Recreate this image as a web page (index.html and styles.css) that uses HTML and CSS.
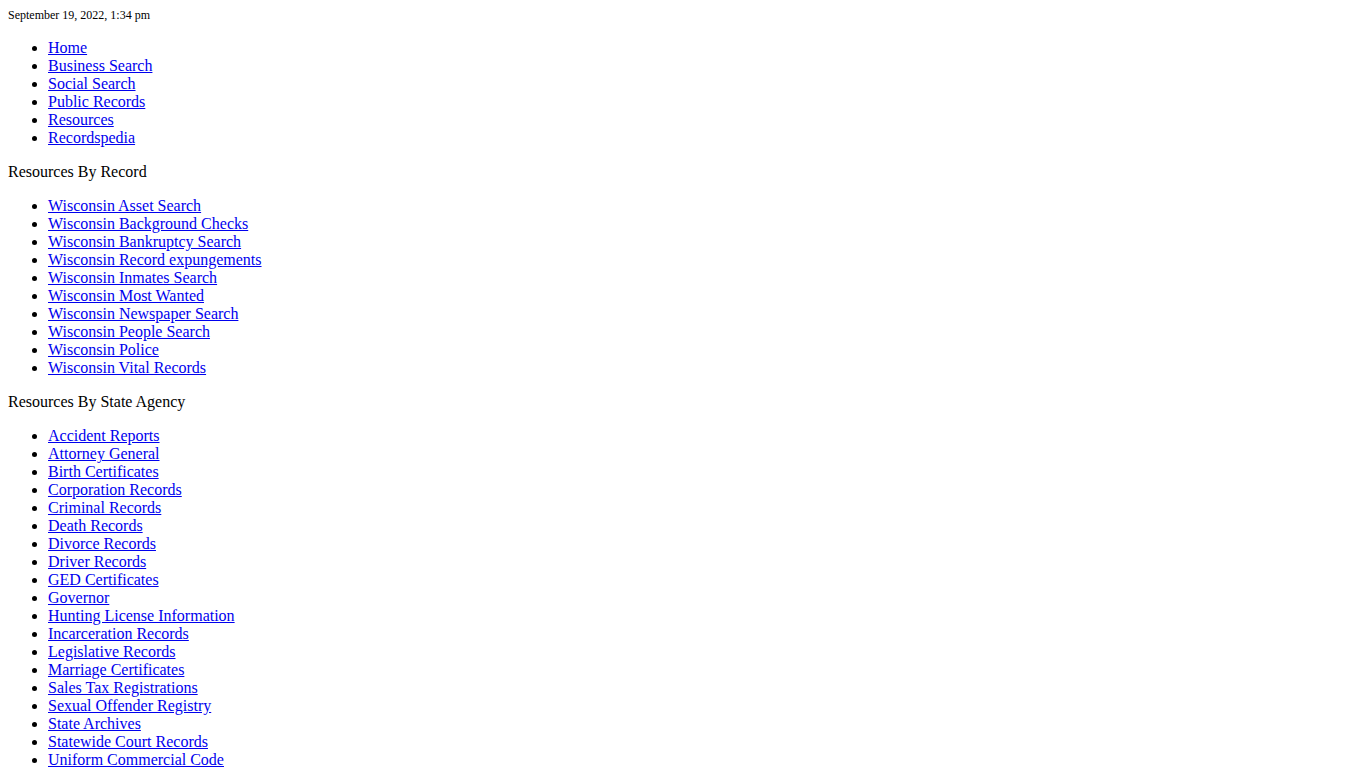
FILE: index.html
```html
<!DOCTYPE html>
<html>
<head>
<meta charset="utf-8">
<link rel="stylesheet" href="styles.css">
</head>
<body>
<div class="date">September 19, 2022, 1:34 pm</div>
<ul class="list">
<li><a href="#">Home</a></li>
<li><a href="#">Business Search</a></li>
<li><a href="#">Social Search</a></li>
<li><a href="#">Public Records</a></li>
<li><a href="#">Resources</a></li>
<li><a href="#">Recordspedia</a></li>
</ul>
<div class="heading">Resources By Record</div>
<ul class="list">
<li><a href="#">Wisconsin Asset Search</a></li>
<li><a href="#">Wisconsin Background Checks</a></li>
<li><a href="#">Wisconsin Bankruptcy Search</a></li>
<li><a href="#">Wisconsin Record expungements</a></li>
<li><a href="#">Wisconsin Inmates Search</a></li>
<li><a href="#">Wisconsin Most Wanted</a></li>
<li><a href="#">Wisconsin Newspaper Search</a></li>
<li><a href="#">Wisconsin People Search</a></li>
<li><a href="#">Wisconsin Police</a></li>
<li><a href="#">Wisconsin Vital Records</a></li>
</ul>
<div class="heading">Resources By State Agency</div>
<ul class="list">
<li><a href="#">Accident Reports</a></li>
<li><a href="#">Attorney General</a></li>
<li><a href="#">Birth Certificates</a></li>
<li><a href="#">Corporation Records</a></li>
<li><a href="#">Criminal Records</a></li>
<li><a href="#">Death Records</a></li>
<li><a href="#">Divorce Records</a></li>
<li><a href="#">Driver Records</a></li>
<li><a href="#">GED Certificates</a></li>
<li><a href="#">Governor</a></li>
<li><a href="#">Hunting License Information</a></li>
<li><a href="#">Incarceration Records</a></li>
<li><a href="#">Legislative Records</a></li>
<li><a href="#">Marriage Certificates</a></li>
<li><a href="#">Sales Tax Registrations</a></li>
<li><a href="#">Sexual Offender Registry</a></li>
<li><a href="#">State Archives</a></li>
<li><a href="#">Statewide Court Records</a></li>
<li><a href="#">Uniform Commercial Code</a></li>
</ul>
</body>
</html>
```
FILE: styles.css
```css
html, body {
  font-family: "Liberation Serif", "Times New Roman", serif;
  font-size: 16px;
  color: #000;
  background: #fff;
}
body {
  margin: 8px;
}
.date {
  font-size: 12px;
}
.list {
  margin: 16px 0;
  padding-left: 40px;
}
.list a {
  color: #0000ee;
}
.heading {
  margin: 16px 0;
}
```
